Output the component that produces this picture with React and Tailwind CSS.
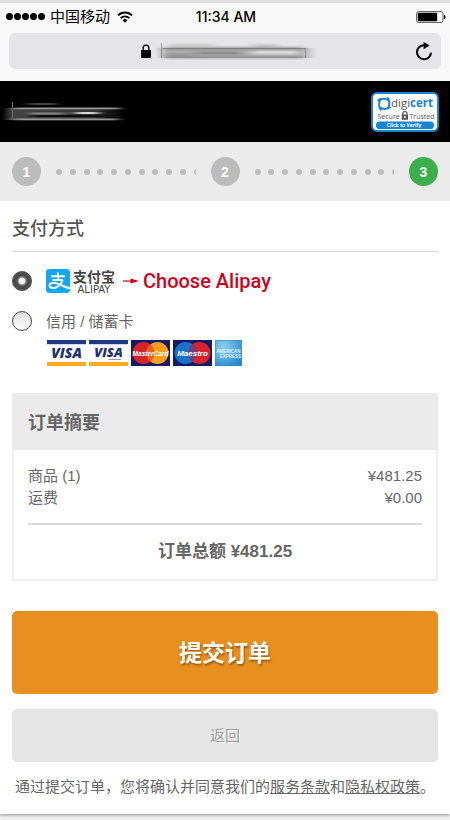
import React, { useState } from 'react';

const SignalDots = () => (
    <div className="flex gap-px">
        {[0, 1, 2, 3, 4].map((i) => (
            <span key={i} className="w-[7px] h-[7px] rounded-full bg-black" />
        ))}
    </div>
);

const WifiIcon = () => (
    <svg className="w-4 h-3" viewBox="0 0 16 12" fill="none" stroke="#000" strokeWidth="1.9">
        <path d="M1 4.4a10 10 0 0 1 14 0" />
        <path d="M3.7 7.1a6.1 6.1 0 0 1 8.6 0" />
        <path d="M8 11.8 5.6 9.3a3.4 3.4 0 0 1 4.8 0z" fill="#000" stroke="none" />
    </svg>
);

const BatteryIcon = () => (
    <svg className="w-[30px] h-3" viewBox="0 0 30 12">
        <rect x="0.6" y="0.6" width="26.4" height="10.8" rx="2" fill="#fff" stroke="#555" strokeWidth="1" />
        <rect x="1.8" y="1.8" width="19.4" height="8.4" rx="0.8" fill="#000" />
        <path d="M28 3.8c2 .6 2 3.8 0 4.4z" fill="#000" />
    </svg>
);

const LockIcon = () => (
    <svg className="w-[10px] h-[14px]" viewBox="0 0 10 14">
        <path d="M2.2 7V4a2.8 2.8 0 0 1 5.6 0v3" fill="none" stroke="#000" strokeWidth="1.3" />
        <rect x="0" y="6" width="10" height="8" rx="0.8" fill="#000" />
    </svg>
);

const ReloadIcon = () => (
    <svg className="w-[18px] h-[19px]" viewBox="0 0 18 19">
        <path d="M9.2 3.2A7 7 0 1 0 16 10.6" fill="none" stroke="#000" strokeWidth="2" />
        <path d="M8.6 0l6 3.5-6 3.7z" fill="#000" />
    </svg>
);

const UrlSmear = () => (
    <svg className="w-[162px] h-[18px]" viewBox="0 0 162 18" preserveAspectRatio="none">
        <defs>
            <filter id="urlBlur" x="-10%" y="-50%" width="120%" height="200%"><feGaussianBlur stdDeviation="5 0.8" /></filter>
            <linearGradient id="urlFade" x1="0" x2="1" y1="0" y2="0">
                <stop offset="0" stopColor="#aaa" stopOpacity="0" />
                <stop offset="0.08" stopColor="#b0b0b0" />
                <stop offset="0.9" stopColor="#b0b0b0" />
                <stop offset="1" stopColor="#b0b0b0" stopOpacity="0" />
            </linearGradient>
        </defs>
        <rect x="0" y="6" width="162" height="10" fill="url(#urlFade)" />
        <g filter="url(#urlBlur)">
            <rect x="14" y="2" width="46" height="2" fill="#c4c4c4" />
            <rect x="98" y="2.5" width="24" height="2" fill="#b5b5b5" />
            <rect x="10" y="5.5" width="138" height="1.8" fill="#777" />
            <rect x="10" y="14.5" width="138" height="1.6" fill="#777" />
            <rect x="40" y="10" width="46" height="2" fill="#777" />
            <rect x="98" y="9" width="44" height="3" fill="#e5e5e5" />
            <rect x="12" y="11" width="26" height="3" fill="#999" />
        </g>
        <path d="M6.500 1v15M150.500 6v10M8 6.500h142" stroke="#777" strokeOpacity="0.7" strokeWidth="1" fill="none" />
    </svg>
);

const BrandSmear = () => (
    <svg className="w-[130px] h-[22px]" viewBox="0 0 130 22">
        <defs>
            <filter id="brandBlur" x="-10%" y="-50%" width="120%" height="200%"><feGaussianBlur stdDeviation="5 0.7" /></filter>
            <linearGradient id="brandFade" x1="0" x2="1" y1="0" y2="0">
                <stop offset="0" stopColor="#444" stopOpacity="0" />
                <stop offset="0.08" stopColor="#444" />
                <stop offset="0.75" stopColor="#333" />
                <stop offset="1" stopColor="#222" stopOpacity="0" />
            </linearGradient>
        </defs>
        <rect x="2" y="7" width="124" height="12" fill="url(#brandFade)" />
        <g filter="url(#brandBlur)">
            <rect x="28" y="2" width="28" height="2" fill="#444" />
            <rect x="14" y="6.500" width="106" height="1.800" fill="#999" />
            <rect x="14" y="17.500" width="104" height="1.800" fill="#999" />
            <rect x="76" y="11" width="22" height="2" fill="#ddd" />
            <rect x="30" y="11.500" width="34" height="2" fill="#888" />
            <rect x="32" y="14" width="74" height="2" fill="#111" />
        </g>
        <path d="M12.500 1v18" stroke="#666" strokeWidth="1" />
    </svg>
);

const DigicertSeal = () => (
    <svg className="w-[68px] h-10" viewBox="0 0 68 40">
        <rect x="1" y="1" width="66" height="38" rx="5" fill="#fff" stroke="#1785cf" strokeWidth="2" />
        <g transform="translate(13.2 11.8)" fill="none" stroke="#1785cf" strokeWidth="1.9">
            <path d="M-6.6-3.200C-3-5.600 1.500-5.400 4.800-3.600" />
            <path d="M3.200-6.600C5.600-3 5.400 1.500 3.600 4.800" />
            <path d="M6.600 3.200C3 5.600-1.500 5.400-4.800 3.600" />
            <path d="M-3.200 6.600C-5.600 3-5.400-1.500-3.600-4.800" />
        </g>
        <text x="20" y="15.4" fontFamily="Open Sans, sans-serif" fontSize="11.5" fill="#555">
            digi<tspan fill="#1785cf" fontWeight="700">cert</tspan>
        </text>
        <text x="6.5" y="26.8" fontFamily="Open Sans, sans-serif" fontSize="7" fill="#555">Secure</text>
        <text x="38.5" y="26.8" fontFamily="Open Sans, sans-serif" fontSize="7" fill="#555">Trusted</text>
        <path d="M31.8 23.500v-1.900a2.100 2.100 0 0 1 4.200 0v1.900" fill="none" stroke="#555" strokeWidth="1.200" />
        <rect x="30.800" y="22.400" width="6.200" height="5.400" rx="0.600" fill="#555" />
        <circle cx="33.900" cy="25" r="1" fill="#fff" />
        <rect x="5" y="29.400" width="58" height="7.600" rx="3.600" fill="#1785cf" />
        <text x="33" y="35.300" textAnchor="middle" fontFamily="Open Sans, sans-serif" fontWeight="700" fontSize="5" fill="#fff">Click to Verify</text>
    </svg>
);

const AlipayMark = () => (
    <svg className="w-6 h-6" viewBox="0 0 24 24">
        <rect width="24" height="24" rx="3.500" fill="#10a8ee" />
        <g fill="none" stroke="#fff" strokeWidth="2">
            <path d="M5 7.200h14M12 3.500v7.200M6.500 11h10.500" />
            <path d="M16.600 11c-1 3.200-3.400 6.200-6.600 7.500-3 1.100-6.500.2-6.500-2.100 0-2.600 4-3.100 7.200-2 4.300 1.500 7.500 3.400 13.300 5" />
        </g>
    </svg>
);

const ArrowIcon = () => (
    <svg className="w-4 h-2" viewBox="0 0 16 8">
        <path d="M0 4h9" stroke="#d0021b" strokeWidth="1.200" />
        <path d="M7.500 1.400 16 4 7.500 6.600z" fill="#d0021b" />
    </svg>
);

const VisaCard = ({ small }) => (
    <svg className="w-[39px] h-[26px]" viewBox="0 0 39 26">
        <rect width="39" height="26" fill="#fff" />
        <rect width="39" height="4.200" fill="#1f3685" />
        <rect y="22" width="39" height="4" fill="#fbab18" />
        <text x="19.500" y={small ? 17 : 18} textAnchor="middle" fontFamily="Open Sans, sans-serif" fontStyle="italic" fontWeight="800" fontSize={small ? 13 : 14} fill="#1f3070">VISA</text>
        {small && <path d="M20 19.500h12" stroke="#8b97bd" strokeWidth="1" />}
    </svg>
);

const CircleCard = ({ label, left, right, middle }) => (
    <svg className="w-[39px] h-[26px]" viewBox="0 0 39 26">
        <rect width="39" height="26" fill="#141a66" />
        <circle cx="12.500" cy="13" r="11" fill={left} />
        <circle cx="26.500" cy="13" r="11" fill={right} />
        <path d="M19.500 4.500a11 11 0 0 1 0 17 11 11 0 0 1 0-17z" fill={middle} />
        <text x="19.500" y="15.800" textAnchor="middle" fontFamily="Liberation Sans, sans-serif" fontStyle="italic" fontWeight="700" fontSize={label === 'Maestro' ? 8 : 6.5} fill="#fff">{label}</text>
    </svg>
);

const AmexCard = () => (
    <svg className="w-[27px] h-[26px]" viewBox="0 0 27 26">
        <defs>
            <radialGradient id="amex" cx="0.3" cy="0.25" r="0.9">
                <stop offset="0" stopColor="#8fcdf0" />
                <stop offset="1" stopColor="#2386cf" />
            </radialGradient>
        </defs>
        <rect width="27" height="26" fill="url(#amex)" />
        <rect x="0.500" y="0.500" width="26" height="25" fill="none" stroke="#2b8ed2" strokeOpacity="0.6" />
        <text x="13.500" y="13" textAnchor="middle" fontFamily="Liberation Sans, sans-serif" fontWeight="700" fontSize="4.500" fill="#e4f3fc">AMERICAN</text>
        <text x="15.500" y="18" textAnchor="middle" fontFamily="Liberation Sans, sans-serif" fontWeight="700" fontSize="4.500" fill="#e4f3fc">EXPRESS</text>
    </svg>
);

const Step = ({ number, active }) => (
    <li className={`w-[29px] h-[29px] flex-shrink-0 rounded-full flex items-center justify-center text-sm font-bold text-white ${active ? 'bg-[#3bb04a]' : 'bg-[#bcbcbc]'}`}>
        {number}
    </li>
);

const StepDots = () => (
    <li aria-hidden="true" className="flex-1 mx-[15px] overflow-hidden">
        <div className="flex justify-between -mr-1">
            {Array.from({ length: 11 }).map((_, i) => (
                <span key={i} className="w-1.5 h-1.5 flex-shrink-0 rounded-full bg-[#bcbcbc]" />
            ))}
        </div>
    </li>
);

const radioClass = "appearance-none w-5 h-5 flex-shrink-0 rounded-full border border-[#444] bg-linear-to-b from-[#dcdcdc] to-white checked:bg-[radial-gradient(circle,#fff_0,#e8e8e8_3px,#777_4px,#444_6px,#555_9px)]";

export default function App() {
    const [method, setMethod] = useState('alipay');

    return (
        <div className="min-h-screen bg-[#efefef] font-['Liberation_Sans','Noto_Sans_CJK_SC',sans-serif] text-[15px] leading-[22px] text-[#666]">
            <div className="bg-white border-t-3 border-[#e0e0e0] shadow-[0_1px_3px_rgba(0,0,0,0.4)]">
                <header className="bg-[#f8f8f8]">
                    <div className="grid grid-cols-[1fr_auto_1fr] items-center h-[27px] pl-[6px] pr-1 text-black">
                        <div className="flex items-center">
                            <SignalDots />
                            <span className="ml-[5px] mr-[7px]">中国移动</span>
                            <WifiIcon />
                        </div>
                        <span className="font-['Inter',sans-serif] text-sm font-medium">11:34 AM</span>
                        <div className="flex justify-end"><BatteryIcon /></div>
                    </div>
                    <div className="px-[9px] pt-[3px] pb-3">
                        <div className="grid grid-cols-[1fr_auto_1fr] items-center h-9 pl-4 pr-2 rounded-md bg-[#e5e5e7]">
                            <span />
                            <div className="flex items-center gap-1">
                                <LockIcon />
                                <UrlSmear />
                            </div>
                            <button type="button" aria-label="刷新" className="justify-self-end"><ReloadIcon /></button>
                        </div>
                    </div>
                </header>

                <div className="flex items-center justify-between h-[61px] pr-[11px] bg-black">
                    <BrandSmear />
                    <DigicertSeal />
                </div>

                <ol className="flex items-center h-[59px] px-3 bg-[#ebebeb]">
                    <Step number={1} />
                    <StepDots />
                    <Step number={2} />
                    <StepDots />
                    <Step number={3} active />
                </ol>

                <main className="px-3 pb-4">
                    <h2 className="pt-[18px] pb-[11px] text-lg leading-[21px] font-medium text-[#555] border-b border-[#d8d8d8]">支付方式</h2>

                    <div className="flex items-center gap-[14px] h-6 mt-[17px]">
                        <input id="alipay" type="radio" name="method" className={radioClass} checked={method === 'alipay'} onChange={() => setMethod('alipay')} />
                        <label htmlFor="alipay" className="flex items-center">
                            <AlipayMark />
                            <span className="ml-[3px] flex flex-col items-center text-[#444]">
                                <span className="text-sm leading-4 font-bold">支付宝</span>
                                <span className="font-['DejaVu_Sans',sans-serif] text-[10px] leading-[9px]">ALIPAY</span>
                            </span>
                            <span className="ml-2 flex items-center gap-1 text-[#d0021b]">
                                <ArrowIcon />
                                <span className="font-['Roboto',sans-serif] text-[20px] font-medium">Choose Alipay</span>
                            </span>
                        </label>
                    </div>

                    <div className="flex items-start gap-[14px] mt-[18px]">
                        <input id="card" type="radio" name="method" className={radioClass} checked={method === 'card'} onChange={() => setMethod('card')} />
                        <label htmlFor="card">
                            <span className="block">信用 / 储蓄卡</span>
                            <span className="flex gap-[3px] mt-[7px] pl-px">
                                <VisaCard />
                                <VisaCard small />
                                <CircleCard label="MasterCard" left="#d8232a" right="#f79f1a" middle="#e8601f" />
                                <CircleCard label="Maestro" left="#1673c9" right="#d8232a" middle="#6c3f80" />
                                <AmexCard />
                            </span>
                        </label>
                    </div>

                    <section className="mt-[27px] border-2 border-t-0 border-[#f0f0f0]">
                        <h2 className="-mx-0.5 pt-5 pb-4 pl-4 text-lg leading-[21px] font-bold text-[#666] bg-[#ebebeb]">订单摘要</h2>
                        <div className="px-[14px] pt-[15px] pb-4">
                            <dl>
                                <div className="flex justify-between">
                                    <dt>商品 (1)</dt>
                                    <dd>¥481.25</dd>
                                </div>
                                <div className="flex justify-between">
                                    <dt>运费</dt>
                                    <dd>¥0.00</dd>
                                </div>
                            </dl>
                            <p className="mt-[14px] pt-4 border-t-2 border-[#dadada] text-center text-[17px] font-bold">订单总额 ¥481.25</p>
                        </div>
                    </section>

                    <button type="button" className="block w-full h-[83px] mt-[30px] rounded-[5px] bg-[#e98f1f] text-[23px] font-bold text-white [text-shadow:1px_2px_2px_rgba(0,0,0,0.35)]">
                        提交订单
                    </button>
                    <button type="button" className="block w-full h-[53px] mt-[15px] rounded-[5px] bg-[#e5e5e5] text-[#999] [text-shadow:1px_1px_0_#fff]">
                        返回
                    </button>
                    <p className="mt-[14px] text-center">
                        通过提交订单，您将确认并同意我们的<a href="#terms" className="underline">服务条款</a>和<a href="#privacy" className="underline">隐私权政策</a>。
                    </p>
                </main>
            </div>
        </div>
    );
}
